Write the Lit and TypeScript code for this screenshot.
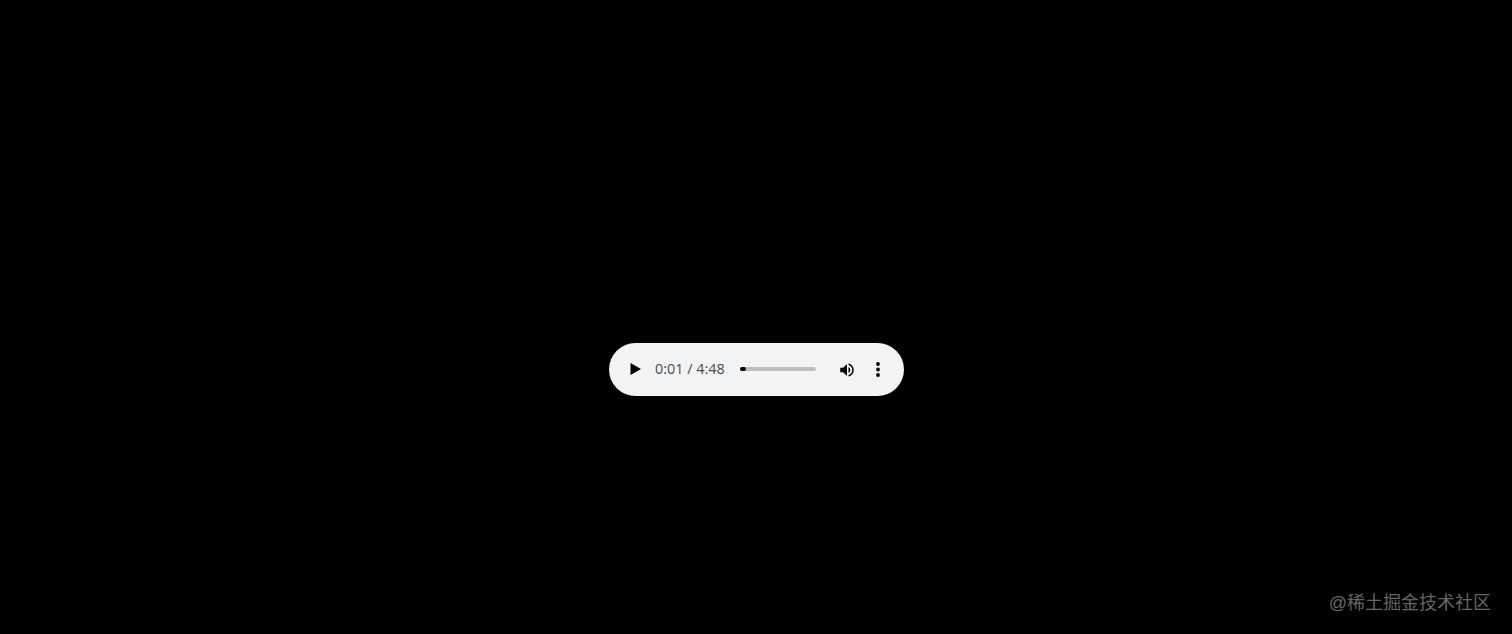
import { LitElement, html, css } from "lit";
import { customElement } from "lit/decorators.js";

@customElement("app-root")
export class AppRoot extends LitElement {
  static styles = css`
    :host {
      display: flex;
      box-sizing: border-box;
      position: relative;
      width: 100%;
      height: 634px;
      padding: 343px 0 0 1px;
      background: #000;
      align-items: flex-start;
      justify-content: center;
      overflow: hidden;
      font-family: "Open Sans", "Liberation Sans", sans-serif;
    }
    .player {
      box-sizing: border-box;
      width: 295px;
      height: 53px;
      border-radius: 27px;
      background: #f1f3f4;
      display: flex;
      align-items: center;
      padding: 0 18px 0 21px;
    }
    .play { width: 12px; height: 14px; margin-top: -1px; display: block; flex: none; }
    .time {
      margin-left: 13px;
      margin-top: -1px;
      font-size: 14.4px;
      line-height: 18px;
      color: #4a4c4d;
      white-space: nowrap;
      width: 70px;
      flex: none;
    }
    .track {
      margin-left: 15px;
      width: 76px;
      height: 4px;
      margin-top: -1px;
      border-radius: 2px;
      background: #bfbfc0;
      flex: none;
      display: flex;
    }
    .fill { width: 6px; height: 4px; border-radius: 2px; background: #000; }
    .vol { margin-left: 22px; width: 18px; height: 18px; display: block; flex: none; }
    .more { margin-left: 20px; width: 4px; height: 15px; display: block; flex: none; }
    .mark {
      position: absolute;
      right: 21px;
      bottom: 20px;
      font-family: "Liberation Sans", "Noto Sans CJK SC", sans-serif;
      font-size: 18px;
      line-height: 22px;
      color: #666;
      white-space: nowrap;
    }
  `;

  render() {
    return html`
      <div class="player">
        <svg class="play" viewBox="0 0 12 14"><path d="M0.5 1v12l10.5-6z" fill="#000"></path></svg>
        <span class="time">0:01 / 4:48</span>
        <div class="track"><div class="fill"></div></div>
        <svg class="vol" viewBox="0 0 24 24"><path d="M3 9v6h4l5 5V4L7 9H3zm13.5 3A4.5 4.5 0 0 0 14 7.97v8.05A4.5 4.5 0 0 0 16.5 12zM14 3.23v2.06c2.89.86 5 3.54 5 6.71s-2.11 5.85-5 6.71v2.06c4.01-.91 7-4.49 7-8.77s-2.99-7.86-7-8.77z" fill="#000"></path></svg>
        <svg class="more" viewBox="0 0 4 15"><circle cx="2" cy="2" r="1.9" fill="#000"></circle><circle cx="2" cy="7.5" r="1.9" fill="#000"></circle><circle cx="2" cy="13" r="1.9" fill="#000"></circle></svg>
      </div>
      <div class="mark">@稀土掘金技术社区</div>
    `;
  }
}
